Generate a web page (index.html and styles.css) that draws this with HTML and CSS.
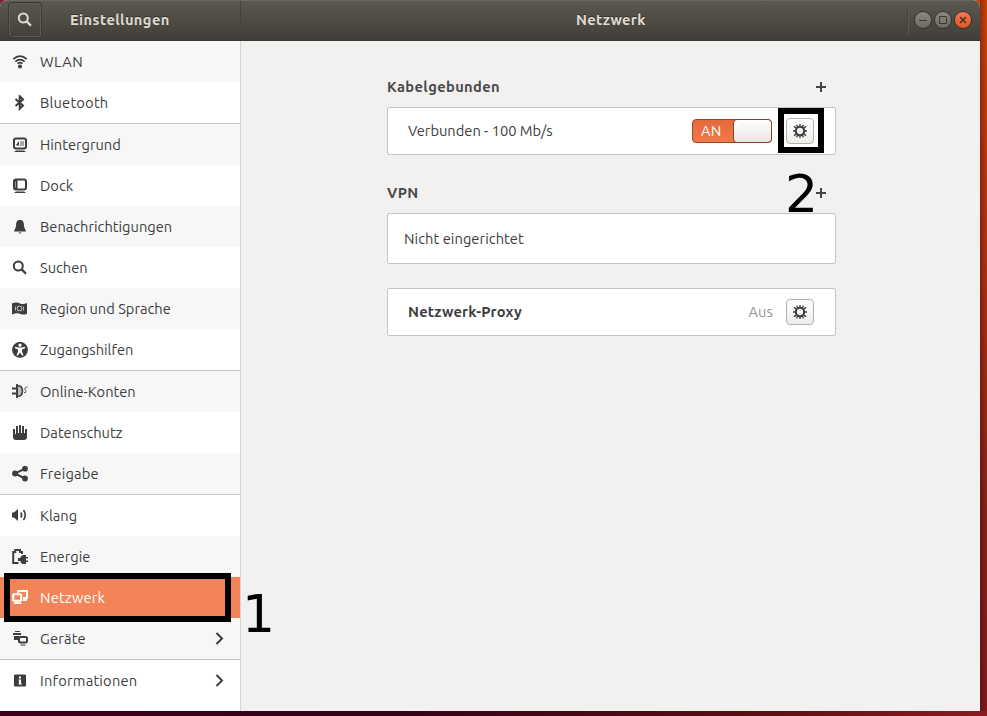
FILE: index.html
```html
<!DOCTYPE html>
<html lang="de">
<head>
<meta charset="utf-8">
<title>Einstellungen</title>
<link rel="stylesheet" href="styles.css">
</head>
<body>
<svg class="defs" width="0" height="0">
  <symbol id="search" viewBox="0 0 16 16"><circle cx="6.300" cy="6" r="4.500" fill="none" stroke="currentColor" stroke-width="2"/><path d="M9.700 9.400L14 13.700" stroke="currentColor" stroke-width="2.200"/></symbol>
  <symbol id="gear" viewBox="0 0 16 16"><circle cx="8" cy="8" r="4.200" fill="none" stroke="currentColor" stroke-width="2.100"/><path d="M8 4V1M8 12v3M4.900 5.500L2 3.400M11.100 5.500L14 3.400M4.900 10.500L2 12.600M11.100 10.500L14 12.600M4 8H1M12 8h3M6 4.500L4.600 1.800M10 4.500l1.400-2.700M6 11.500l-1.400 2.700M10 11.500l1.400 2.700" stroke="currentColor" stroke-width="1.400"/></symbol>
  <symbol id="arrow" viewBox="0 0 16 16"><path d="M5.500 2L11 7.500L5.500 13" fill="none" stroke="currentColor" stroke-width="2"/></symbol>
</svg>
<div class="window">
  <header class="titlebar">
    <div class="side-title">
      <span class="search-button"><svg class="icon"><use href="#search"/></svg></span>
      <h1 class="title">Einstellungen</h1>
    </div>
    <div class="main-title"><h1 class="title network-title">Netzwerk</h1></div>
    <div class="controls">
      <span class="control"><svg viewBox="0 0 18 18"><path d="M5 9.500h8"/></svg></span>
      <span class="control"><svg viewBox="0 0 18 18"><path d="M5.500 5.500h7v7h-7z"/></svg></span>
      <span class="control close"><svg viewBox="0 0 18 18"><path d="M6 6l6 6m0-6l-6 6" stroke-width="1.600"/></svg></span>
    </div>
  </header>
  <div class="body">
    <nav class="sidebar">
      <div class="row shade"><svg class="icon" viewBox="0 0 16 16"><g fill="none" stroke="currentColor" stroke-width="1.700"><path d="M1.200 5.200Q8-.8 14.800 5.200M3.300 7.700Q8 3.700 12.700 7.700M5.500 9.700Q8 7.700 10.500 9.700"/></g><circle cx="8" cy="12.500" r="2" fill="currentColor"/></svg><span class="wlan">WLAN</span></div>
      <div class="row"><svg class="icon" viewBox="0 0 16 16"><path d="M3.500 4L11 10.500L7.700 13.800V1.200L11 4.500L3.500 11" fill="none" stroke="currentColor" stroke-width="2"/></svg><span class="wide">Bluetooth</span></div>
      <div class="row shade sep"><svg class="icon" viewBox="0 0 16 16"><rect x="2" y="1.500" width="12" height="10" rx="2" fill="#fff" stroke="currentColor" stroke-width="2"/><path d="M8 4h4v5H4V8h4z" fill="#aaa"/><path d="M7 4v4H4zM4 13.500h8l2 1.500H2z" fill="currentColor"/></svg><span>Hintergrund</span></div>
      <div class="row"><svg class="icon" viewBox="0 0 16 16"><rect x="2" y="1.500" width="12" height="10" rx="2" fill="none" stroke="currentColor" stroke-width="2"/><path d="M3 2h2.500v9H3zM4 13.500h8l2 1.500H2z" fill="currentColor"/><path d="M3.500 3.500v6" stroke="#999"/></svg><span>Dock</span></div>
      <div class="row shade"><svg class="icon" viewBox="0 0 16 16"><path d="M8 1C4.700 1 4.300 3.200 4 6.500C3.800 9.500 2.200 10.500 2 12.500h12c-.2-2-1.800-3-2-6C11.700 3.200 11.300 1 8 1zM6.500 13.500a1.500 1 0 0 0 3 0z" fill="currentColor"/></svg><span>Benachrichtigungen</span></div>
      <div class="row"><svg class="icon"><use href="#search"/></svg><span>Suchen</span></div>
      <div class="row shade"><svg class="icon" viewBox="0 0 16 16"><path d="M0 2.500C4 1 5 1.500 8 2.500S12 3 15 2v11c-4 1-5 .5-7.500-.3S3.500 12.500 0 13.500z" fill="currentColor"/><g fill="none" stroke="#ddd" stroke-width=".8"><circle cx="7.500" cy="7.500" r="2.300"/><path d="M3.500 5.500v4M11.500 5.500v4M5 4.700l1 1M10 4.700l-1 1M5 10.300l1-1M10 10.300l-1-1"/></g></svg><span>Region und Sprache</span></div>
      <div class="row"><svg class="icon" viewBox="0 0 16 16"><circle cx="8" cy="7.800" r="7.900" fill="currentColor"/><circle cx="8" cy="3.200" r="1.600" fill="#fff"/><path d="M3 4.700L6 5.500h4l3-.8v1.500L10 7.500v2l1.500 4H10L8 10.500 6 13.500H4.500L6 9.500v-2L3 6.200z" fill="#fff"/></svg><span>Zugangshilfen</span></div>
      <div class="row shade sep"><svg class="icon" viewBox="0 0 16 16"><path d="M0 4.500h4M0 9.500h4" stroke="currentColor" stroke-width="1.800"/><path d="M5 1.500c4 0 5.500 2 5.500 5.500s-1.500 5.500-5.500 5.500z" fill="#bbb" stroke="currentColor" stroke-width="1.500"/><path d="M5 0v14" stroke="currentColor" stroke-width="1.800"/><path d="M12 8.500c2.500.3 2.600-1 1.500-2s-.8-3.500 2-3.500" fill="none" stroke="currentColor"/></svg><span>Online-Konten</span></div>
      <div class="row"><svg class="icon" viewBox="0 0 16 16"><path d="M1 4h2v5h1V1h2v7h1V0h2v8h1V1h2v7h1V4h2v8q0 3-3 3H4q-3 0-3-3z" fill="currentColor"/></svg><span>Datenschutz</span></div>
      <div class="row shade"><svg class="icon" viewBox="0 0 16 16"><path d="M13 2.700L3 7.500l10 5" fill="none" stroke="currentColor" stroke-width="2"/><g fill="currentColor"><circle cx="13" cy="2.700" r="2.900"/><circle cx="3" cy="7.500" r="2.900"/><circle cx="13" cy="12.500" r="2.900"/></g></svg><span class="wide">Freigabe</span></div>
      <div class="row sep"><svg class="icon" viewBox="0 0 16 16"><path d="M0 4.500h2L6 1v12L2 9.500H0z" fill="currentColor"/><path d="M8.800 4.500q1.700 2.500 0 5M11.500 2q3.500 5 0 10" fill="none" stroke="currentColor" stroke-width="1.600"/></svg><span>Klang</span></div>
      <div class="row shade"><svg class="icon" viewBox="0 0 16 16"><path d="M6.500 14H1.200V3h2V1H8v2h2v2" fill="none" stroke="currentColor" stroke-width="2"/><path d="M16 8h-2V6h-2C9 6 8.500 8.500 8.500 9H6v3h2.500c0 .8.500 3 3.500 3h2v-2h2v-1.500h-2v-2h2z" fill="currentColor"/></svg><span>Energie</span></div>
      <div class="row active"><svg class="icon" viewBox="0 0 16 16"><path d="M6 3V1h9v7h-4" fill="none" stroke="currentColor" stroke-width="2"/><rect x="1.200" y="4.200" width="8" height="6.500" rx=".5" fill="#f38459" stroke="currentColor" stroke-width="2"/><path d="M3 12h5l2 2H1zM12 8h3v3h-4V9.500z" fill="currentColor"/></svg><span class="wide">Netzwerk</span></div>
      <div class="row shade"><svg class="icon" viewBox="0 0 16 16"><path d="M3 .5h5" stroke="currentColor"/><path d="M1 3h8M3 6h3v2H3z" stroke="currentColor" stroke-width="2"/><rect x="7" y="6" width="8" height="5.500" rx="1.500" fill="#f7f7f7" stroke="currentColor" stroke-width="2"/><path d="M8.500 14h5" stroke="currentColor"/></svg><span class="wide">Geräte</span><svg class="icon arrow"><use href="#arrow"/></svg></div>
      <div class="row sep"><svg class="icon" viewBox="0 0 16 16"><rect x="2" y="1.500" width="12" height="12" rx="1" fill="currentColor"/><path d="M7 3.500h2v2H7zM6.500 6.500H9v4h1v1H6.500v-1H7v-3h-.5z" fill="#fff"/></svg><span class="wide">Informationen</span><svg class="icon arrow"><use href="#arrow"/></svg></div>
    </nav>
    <main class="content">
      <div class="heading"><h2>Kabelgebunden</h2><svg class="plus" viewBox="0 0 10 10"><path d="M5 0v10M0 5h10"/></svg></div>
      <section class="card wired">
        <span class="status">Verbunden - 100 Mb/s</span>
        <span class="switch"><span class="switch-text">AN</span><span class="knob"></span></span>
        <span class="gear-button"><svg class="icon"><use href="#gear"/></svg></span>
      </section>
      <div class="heading vpn-heading"><h2>VPN</h2><svg class="plus" viewBox="0 0 10 10"><path d="M5 0v10M0 5h10"/></svg></div>
      <section class="card vpn"><span>Nicht eingerichtet</span></section>
      <section class="card proxy">
        <b>Netzwerk-Proxy</b><span class="off">Aus</span>
        <span class="gear-button"><svg class="icon"><use href="#gear"/></svg></span>
      </section>
    </main>
  </div>
</div>
<div class="frame frame-one"></div><span class="number number-one">1</span>
<div class="frame frame-two"></div><span class="number number-two">2</span>
</body>
</html>
```
FILE: styles.css
```css
* { box-sizing: border-box; }
body {
  margin: 0;
  width: 987px;
  height: 716px;
  overflow: hidden;
  position: relative;
  font: 14.667px/20px Ubuntu, "Noto Sans", sans-serif;
  color: #3d3d3d;
  background: linear-gradient(90deg, #3c0220 0, #350219 40%, #541014 75%, #8b1b20 100%) 0 711px / 987px 5px no-repeat,
    linear-gradient(#8b1b2a, #8b1b2a) 0 0 / 8px 8px no-repeat,
    linear-gradient(90deg, rgba(0,0,0,.3), transparent) 980px 0 / 7px 716px no-repeat,
    linear-gradient(#cf430c 0, #b93510 30%, #8c2419 70%, #85191f 100%);
}
.defs { position: absolute; }
h1, h2 { margin: 0; font-size: inherit; line-height: 20px; font-weight: bold; }
svg { display: block; flex: none; }
.icon { width: 16px; height: 16px; }
.window { width: 980px; height: 711px; border-radius: 7px 7px 0 0; overflow: hidden; background: #f2f1f0; }
.titlebar {
  height: 41px;
  display: flex;
  color: #dfdbd2;
  background: linear-gradient(#5b584f, #403e39);
  border-top: 1px solid #6a675d;
  border-bottom: 1px solid #3a3833;
}
.side-title { width: 241px; border-right: 1px solid #45433d; display: flex; padding: 1px 0 0 8px; }
.search-button { width: 34px; height: 36px; border: 1px solid #3a3935; border-radius: 4px; display: grid; place-items: center; box-shadow: inset 0 0 0 1px #5f5c54; }
.title { text-shadow: 0 -1px #34322e; letter-spacing: .4px; margin: 8px 0 0 28px; }
.main-title { flex: 1; padding-top: 1px; }
.network-title { width: 72px; margin-left: 335px; letter-spacing: .33px; }
.controls { border-left: 1px solid #45433d; height: 28px; margin: 5px 8px 0 0; padding: 5px 0 0 6px; display: flex; gap: 2px; width: 65px; box-shadow: inset 1px 0 #5b5951; }
.control { width: 18px; height: 18px; border: 1px solid #35332f; border-radius: 50%; background: linear-gradient(#8b8982, #6b6962); flex: none; }
.control svg { width: 18px; height: 18px; margin: -1px; fill: none; stroke: #3a3833; }
.control.close { background: linear-gradient(#f67a51, #e6531f); }
.body { height: 670px; display: flex; }
.sidebar { width: 241px; background: #fff; border-right: 1px solid #d6d4d2; }
.row { height: 41px; display: flex; align-items: center; padding: 0 13px 0 12px; gap: 12px; }
.shade { background: #f7f7f7; }
.sep { height: 42px; border-top: 1px solid #c8c6c4; }
.active { background: #f38459; color: #fff; }
.wide { letter-spacing: .2px; }
.wlan { letter-spacing: .4px; }
.arrow { margin-left: auto; }
.content { width: 595px; padding: 36px 0 0 146px; }
.heading { height: 20px; display: flex; justify-content: space-between; align-items: center; padding-right: 10px; }
h2 { letter-spacing: .38px; color: #4a4a4a; }
.plus { width: 10px; height: 10px; stroke: #444; stroke-width: 2; }
.card { width: 449px; height: 48px; background: #fff; border: 1px solid #c6c3c0; border-radius: 2px; display: flex; align-items: center; padding: 0 21px 0 20px; }
.wired { margin-top: 10px; }
.vpn-heading { margin-top: 28px; }
.vpn { height: 51px; margin-top: 10px; padding-left: 16px; letter-spacing: .06px; }
.proxy { margin-top: 24px; }
.proxy b { letter-spacing: .2px; }
.off { margin-left: auto; color: #929292; letter-spacing: .1px; }
.gear-button { width: 28px; height: 26px; border: 1px solid #b4b1ad; border-radius: 4px; background: linear-gradient(#fff, #ededeb); display: grid; place-items: center; margin-left: 13px; }
.switch { width: 80px; height: 24px; margin-left: auto; margin-right: 1px; border: 1px solid #9c4727; border-radius: 4px; background: linear-gradient(#e5693a, #f0794a); color: #fff; letter-spacing: .3px; display: flex; justify-content: space-between; align-items: center; padding-left: 8px; }
.knob { width: 39px; height: 24px; margin-right: -1px; border: 1px solid #894128; border-radius: 4px; background: linear-gradient(#fff, #e9e8e6); }
.frame { position: absolute; border: 6px solid #000; }
.frame-one { left: 4px; top: 573px; width: 227px; height: 49px; }
.frame-two { left: 778px; top: 108px; width: 46px; height: 45px; }
.number { position: absolute; color: #000; font: 52px/52px "DejaVu Sans", sans-serif; }
.number-one { left: 242px; top: 588px; }
.number-two { left: 785px; top: 168px; }
```
